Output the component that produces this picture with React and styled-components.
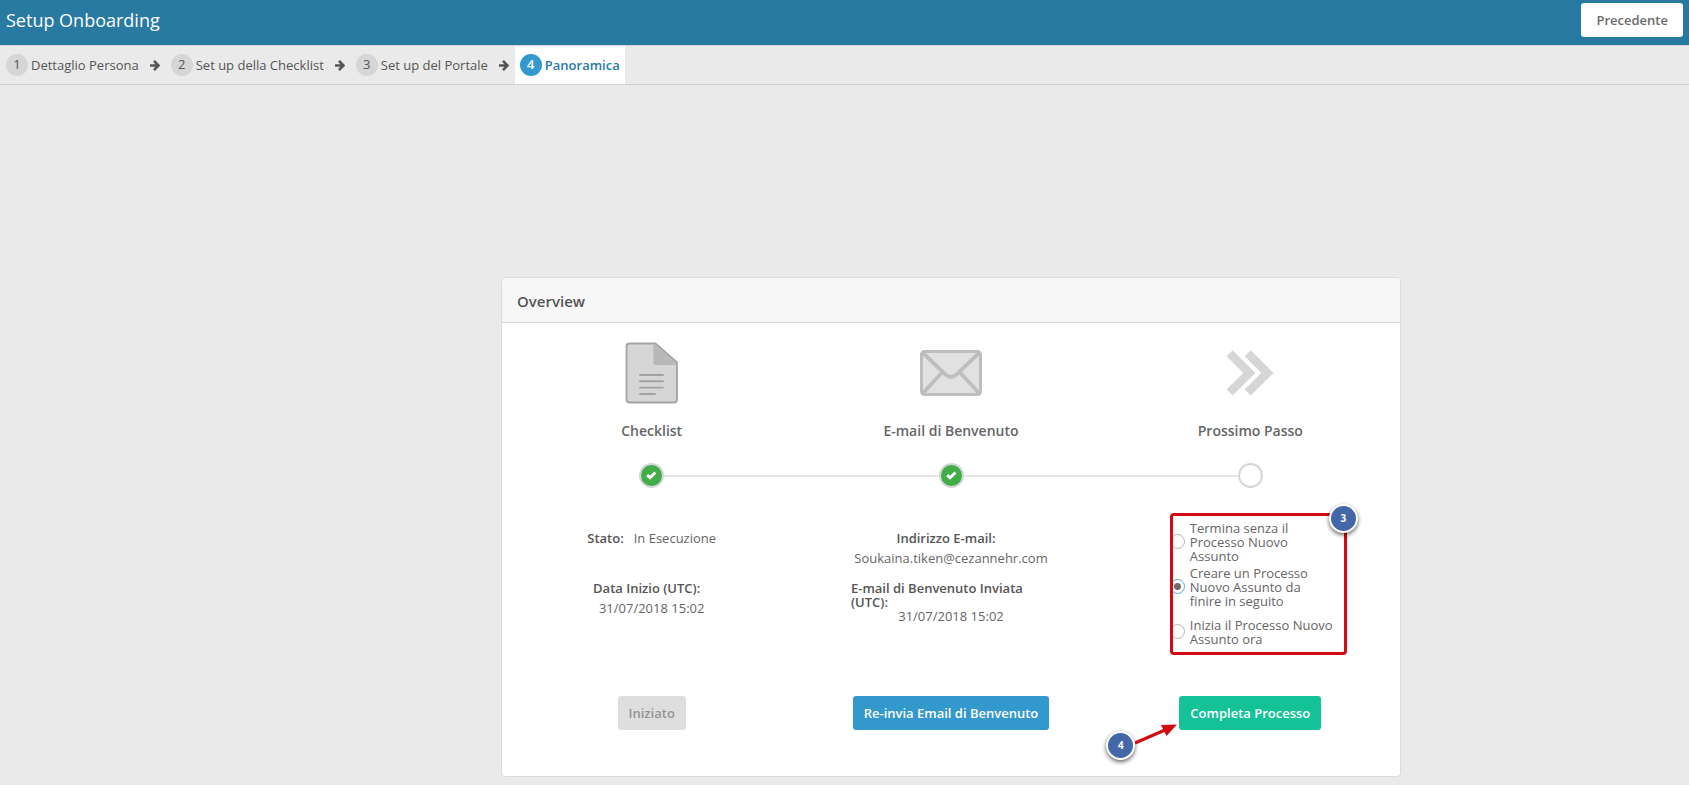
import React, { useState } from "react";
import styled, { createGlobalStyle } from "styled-components";

const steps = ["Dettaglio Persona", "Set up della Checklist", "Set up del Portale", "Panoramica"];

const choices = [
  { value: "finish", label: "Termina senza il Processo Nuovo Assunto" },
  { value: "later", label: "Creare un Processo Nuovo Assunto da finire in seguito" },
  { value: "now", label: "Inizia il Processo Nuovo Assunto ora" },
];

const ArrowIcon = () => (
  <svg width="10" height="11" viewBox="0 0 10 11" fill="none" stroke="#555" strokeWidth="2.6">
    <path d="M0 5.5H8.4M4 0.9L8.4 5.5L4 10.1" />
  </svg>
);

const DocumentIcon = () => (
  <svg width="54" height="62" viewBox="0 0 54 62">
    <path
      d="M4.5 1.5H30.5L52 20.5V57.5Q52 60.5 49 60.5H4.5Q1.5 60.5 1.5 57.5V4.5Q1.5 1.5 4.5 1.5Z"
      fill="#d6d6d6"
      stroke="#a3a3a3"
      strokeWidth="1.8"
      strokeLinejoin="round"
    />
    <path d="M28.3 2.4H30.4L51.1 20.9V23H31Q28.3 23 28.3 20.5Z" fill="#b7b9b8" />
    <path
      d="M15 33H38M15 39.3H38M15 45.6H38M15 52H30"
      stroke="#a3a3a3"
      strokeWidth="1.9"
      strokeLinecap="round"
    />
  </svg>
);

const EnvelopeIcon = () => (
  <svg width="62" height="46" viewBox="0 0 62 46">
    <rect x="1.5" y="1.5" width="59" height="43" rx="3" fill="#e1e1e1" />
    <path
      d="M3 3L24.5 23.5Q30.8 30.5 37.5 23.5L59 3M3 43L21.5 23M59 43L40.5 23"
      fill="none"
      stroke="#bdbfbe"
      strokeWidth="3.8"
    />
    <rect x="1.5" y="1.5" width="59" height="43" rx="3" fill="none" stroke="#bdbfbe" strokeWidth="3" />
  </svg>
);

const ChevronsIcon = () => (
  <svg width="48" height="46" viewBox="0 0 48 46" fill="#d6d6d6">
    <path d="M0.6 6.2L6.6 0.2L29.4 23L6.6 45.6L0.6 39.6L17.2 23Z" />
    <path d="M18.7 6.2L24.7 0.2L47.4 23L24.7 45.6L18.7 39.6L35.2 23Z" />
  </svg>
);

const CheckIcon = () => (
  <svg width="11" height="9" viewBox="0 0 11 9" fill="none" stroke="#fff" strokeWidth="2.8">
    <path d="M1.2 4.1L4 6.7L9.4 1.4" />
  </svg>
);

const Stage = ({ icon, title, done, first, last, children, action }) => (
  <Column>
    <IconBox>{icon}</IconBox>
    <StageTitle>{title}</StageTitle>
    <Track>
      <Line $hidden={first} />
      <Dot $done={done}>{done && <CheckIcon />}</Dot>
      <Line $hidden={last} />
    </Track>
    <Details>{children}</Details>
    {action}
  </Column>
);

const App = () => {
  const [choice, setChoice] = useState("later");

  return (
    <Page>
      <GlobalStyle />
      <TopBar>
        <h1>Setup Onboarding</h1>
        <BackButton type="button">Precedente</BackButton>
      </TopBar>

      <Wizard>
        {steps.map((step, index) => {
          const active = index === steps.length - 1;
          return (
            <React.Fragment key={step}>
              <WizardStep href="#" $active={active} aria-current={active ? "step" : undefined}>
                <StepNumber $active={active}>{index + 1}</StepNumber>
                {step}
              </WizardStep>
              {!active && <ArrowIcon />}
            </React.Fragment>
          );
        })}
      </Wizard>

      <Content>
        <Card>
          <CardHeader>Overview</CardHeader>
          <Columns>
            <Stage
              first
              done
              icon={<DocumentIcon />}
              title="Checklist"
              action={<Button type="button" disabled>Iniziato</Button>}
            >
              <Fields>
                <Field $inline>
                  <dt>Stato:</dt>
                  <dd>In Esecuzione</dd>
                </Field>
                <Field>
                  <dt>Data Inizio (UTC):</dt>
                  <dd>31/07/2018 15:02</dd>
                </Field>
              </Fields>
            </Stage>

            <Stage
              done
              icon={<EnvelopeIcon />}
              title="E-mail di Benvenuto"
              action={<Button type="button" $color="#3398cc">Re-invia Email di Benvenuto</Button>}
            >
              <Fields>
                <Field>
                  <dt>Indirizzo E-mail:</dt>
                  <dd>Soukaina.tiken@cezannehr.com</dd>
                </Field>
                <Field>
                  <dt>E-mail di Benvenuto Inviata (UTC):</dt>
                  <dd>31/07/2018 15:02</dd>
                </Field>
              </Fields>
            </Stage>

            <Stage
              last
              icon={<ChevronsIcon />}
              title="Prossimo Passo"
              action={
                <ActionWrap>
                  <Button type="button" $color="#13c296">Completa Processo</Button>
                  <Pointer>
                    <Badge>4</Badge>
                    <svg width="44" height="24" viewBox="0 0 44 24">
                      <path d="M0 21L30 8" stroke="#d20a11" strokeWidth="3" />
                      <path d="M42 2.5L26 3L31.5 14Z" fill="#d20a11" />
                    </svg>
                  </Pointer>
                </ActionWrap>
              }
            >
              <Choices>
                {choices.map(({ value, label }) => (
                  <Choice key={value}>
                    <Radio
                      name="next"
                      value={value}
                      checked={choice === value}
                      onChange={() => setChoice(value)}
                    />
                    <span>{label}</span>
                  </Choice>
                ))}
                <Highlight />
                <CornerBadge>3</CornerBadge>
              </Choices>
            </Stage>
          </Columns>
        </Card>
      </Content>
    </Page>
  );
};

const GlobalStyle = createGlobalStyle`
  * {
    box-sizing: border-box;
  }
  body {
    margin: 0;
    background: #eaeaea;
    color: #666;
    font-family: "Open Sans", "Noto Sans", sans-serif;
    font-size: 13px;
    line-height: 14px;
  }
  button {
    font-family: inherit;
  }
`;

const Page = styled.div`
  min-height: 100vh;
`;

const TopBar = styled.header`
  display: flex;
  justify-content: space-between;
  align-items: flex-start;
  height: 45px;
  padding: 3px 6px;
  background: #287aa3;

  h1 {
    margin: 0;
    color: #fff;
    font-size: 18px;
    font-weight: 400;
    line-height: 34px;
  }
`;

const BackButton = styled.button`
  height: 34px;
  padding: 0 15px;
  border: 0;
  border-radius: 3px;
  background: #fff;
  color: #6b6b6b;
  font-size: 13px;
  font-weight: 600;
`;

const Wizard = styled.nav`
  display: flex;
  align-items: center;
  gap: 6px;
  height: 40px;
  padding-left: 1px;
  border-top: 1px solid #d6d6d6;
  border-bottom: 1px solid #d3d3d3;
`;

const WizardStep = styled.a`
  display: flex;
  align-items: center;
  gap: 3px;
  height: 100%;
  padding: 0 5px;
  background: ${({ $active }) => ($active ? "#fff" : "transparent")};
  color: ${({ $active }) => ($active ? "#287aa3" : "#555")};
  font-weight: ${({ $active }) => ($active ? 600 : 400)};
  text-decoration: none;
`;

const StepNumber = styled.span`
  width: 22px;
  height: 22px;
  border-radius: 50%;
  background: ${({ $active }) => ($active ? "#3398cc" : "#d6d6d6")};
  color: ${({ $active }) => ($active ? "#fff" : "#555")};
  line-height: 21px;
  text-align: center;
`;

const Content = styled.main`
  display: grid;
  grid-template-columns: 501fr minmax(0, 900px) 288fr;
  padding: 192px 0 8px;
`;

const Card = styled.section`
  grid-column: 2;
  border: 1px solid #dcdcdc;
  border-radius: 4px;
  background: #fff;
`;

const CardHeader = styled.h2`
  height: 45px;
  margin: 0;
  padding: 0 15px;
  border-bottom: 1px solid #dcdcdc;
  border-radius: 4px 4px 0 0;
  background: #f7f7f7;
  color: #555;
  font-size: 15px;
  font-weight: 600;
  line-height: 46px;
`;

const Columns = styled.div`
  display: grid;
  grid-template-columns: repeat(3, 1fr);
  padding: 19px 0 46px;
`;

const Column = styled.div`
  display: flex;
  flex-direction: column;
  align-items: center;
`;

const IconBox = styled.div`
  display: flex;
  align-items: center;
  height: 62px;
`;

const StageTitle = styled.h3`
  margin: 18px 0 23px;
  font-size: 14px;
  font-weight: 600;
  line-height: 18px;
`;

const Track = styled.div`
  display: flex;
  align-items: center;
  align-self: stretch;
`;

const Line = styled.span`
  flex: 1;
  height: 2px;
  background: ${({ $hidden }) => ($hidden ? "transparent" : "#e6e6e6")};
`;

const Dot = styled.span`
  display: flex;
  align-items: center;
  justify-content: center;
  width: 25px;
  height: 25px;
  border: 2px solid #d6d6d6;
  border-radius: 50%;
  background: ${({ $done }) => ($done ? "#41ad49" : "#fff")};
`;

const Details = styled.div`
  min-height: 208px;
`;

const Fields = styled.dl`
  display: flex;
  flex-direction: column;
  gap: 16px;
  width: 200px;
  margin: 43px 0 0;
`;

const Field = styled.div`
  display: flex;
  flex-direction: ${({ $inline }) => ($inline ? "row" : "column")};
  align-items: ${({ $inline }) => ($inline ? "flex-start" : "center")};
  justify-content: ${({ $inline }) => ($inline ? "center" : "flex-start")};
  min-height: 34px;

  dt {
    min-height: 20px;
    padding-right: 10px;
    color: #555;
    font-weight: 600;
  }
  dd {
    margin: 0;
  }
`;

const Choices = styled.div`
  position: relative;
  width: 177px;
  margin: 25px 0 0 16px;
  padding: 6px 0 1px;
`;

const Choice = styled.label`
  display: flex;
  align-items: center;
  gap: 5px;
  height: 45px;

  span {
    max-width: 145px;
  }
`;

const Radio = styled.input.attrs({ type: "radio" })`
  appearance: none;
  flex: none;
  width: 15px;
  height: 15px;
  margin: 0;
  border: 1px solid #b4b4b4;
  border-radius: 50%;
  background: #fff;

  &:checked {
    border-color: #55a9d6;
    background: radial-gradient(circle, #6b6b6b 3px, #fff 4px);
  }
`;

const Highlight = styled.div`
  position: absolute;
  inset: 0;
  border: 3px solid #d20a11;
  border-radius: 4px;
  pointer-events: none;
`;

const Badge = styled.span`
  width: 29px;
  height: 29px;
  border: 2px solid #fff;
  border-radius: 50%;
  background: #4467a8;
  box-shadow: 0 2px 4px rgba(0, 0, 0, 0.6);
  color: #fff;
  font-size: 10px;
  font-weight: 700;
  line-height: 25px;
  text-align: center;
`;

const CornerBadge = styled(Badge)`
  position: absolute;
  top: -9px;
  right: -11px;
`;

const ActionWrap = styled.div`
  position: relative;
`;

const Pointer = styled.div`
  position: absolute;
  top: 26px;
  right: 142px;
  display: flex;
  align-items: flex-end;

  svg {
    margin-bottom: 14px;
  }
`;

const Button = styled.button`
  height: 34px;
  padding: 0 11px;
  border: 0;
  border-radius: 3px;
  background: ${({ $color }) => $color};
  color: #fff;
  font-size: 13px;
  font-weight: 600;
  white-space: nowrap;

  &:disabled {
    background: #dedede;
    color: #949494;
  }
`;

export default App;
